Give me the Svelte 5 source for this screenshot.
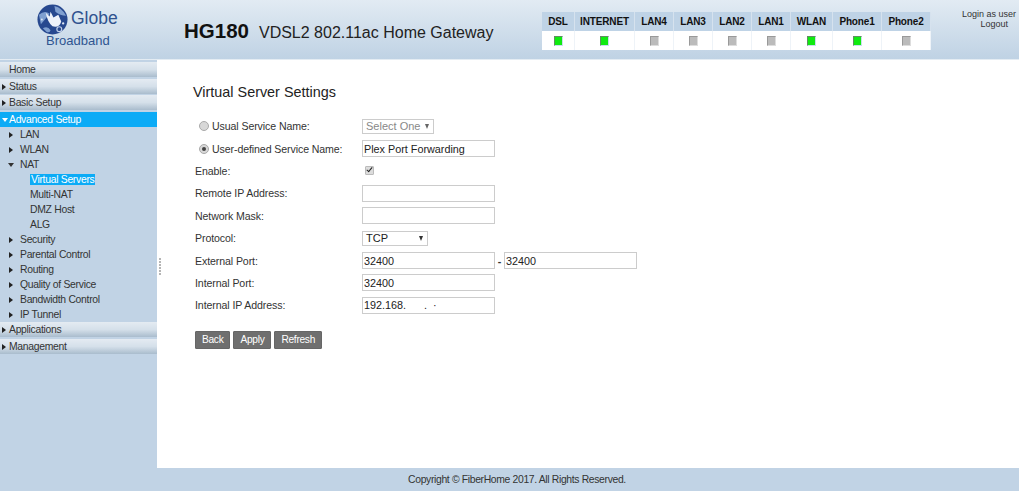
<script>
	const lights = [
		{ name: 'DSL', width: 32, on: true },
		{ name: 'INTERNET', width: 59, on: true },
		{ name: 'LAN4', width: 38, on: false },
		{ name: 'LAN3', width: 38, on: false },
		{ name: 'LAN2', width: 38, on: false },
		{ name: 'LAN1', width: 38, on: false },
		{ name: 'WLAN', width: 41, on: true },
		{ name: 'Phone1', width: 48, on: true },
		{ name: 'Phone2', width: 48, on: false }
	];

	const subItems = [
		{ name: 'LAN' },
		{ name: 'WLAN' },
		{ name: 'NAT', open: true, children: ['Virtual Servers', 'Multi-NAT', 'DMZ Host', 'ALG'] },
		{ name: 'Security' },
		{ name: 'Parental Control' },
		{ name: 'Routing' },
		{ name: 'Quality of Service' },
		{ name: 'Bandwidth Control' },
		{ name: 'IP Tunnel' }
	];
</script>

<div class="page">
	<header>
		<div class="logo">
			<svg width="31" height="31" viewBox="0 0 32 32">
				<circle cx="16" cy="16" r="15.5" fill="#27488f" />
				<path d="M2 11 Q8 6 13 10 Q9 15 4 21Z M18 2 Q26 4 30 12 Q24 12 19 8Z M6 25 Q11 22 14 27 Q13 30 10 29Z" fill="#7f9fd0" />
				<path d="M9 9 L13 13 L14 8 L17 14 L22 11 L25 18 Q23 25 16 23 Q11 19 9 9Z" fill="#eef2fa" />
				<circle cx="23" cy="26" r="2.5" fill="none" stroke="#c3d2ea" stroke-width="1.2" />
				<circle cx="5" cy="16" r="1" fill="#dfe8f5" />
				<circle cx="27" cy="20" r="1.2" fill="#dfe8f5" />
			</svg>
			<span class="globe">Globe</span>
			<span class="broadband">Broadband</span>
		</div>
		<div class="title"><strong>HG180</strong><span>VDSL2 802.11ac Home Gateway</span></div>
		<table class="lights">
			<thead>
				<tr>
					{#each lights as l}
						<th style="width: {l.width}px">{l.name}</th>
					{/each}
				</tr>
			</thead>
			<tbody>
				<tr>
					{#each lights as l}
						<td><i class="led" class:on={l.on}></i></td>
					{/each}
				</tr>
			</tbody>
		</table>
		<div class="login">
			<div>Login as user</div>
			<div class="logout">Logout</div>
		</div>
	</header>

	<div class="middle">
		<nav>
			<div class="top">Home</div>
			<div class="top"><i class="tri"></i>Status</div>
			<div class="top"><i class="tri"></i>Basic Setup</div>
			<div class="top active"><i class="tri down"></i>Advanced Setup</div>
			<ul>
				{#each subItems as item}
					<li>
						<i class="tri" class:down={item.open}></i>{item.name}
					</li>
					{#if item.children}
						{#each item.children as child, i}
							<li class="child"><span class:current={i === 0}>{child}</span></li>
						{/each}
					{/if}
				{/each}
			</ul>
			<div class="top"><i class="tri"></i>Applications</div>
			<div class="top"><i class="tri"></i>Management</div>
		</nav>

		<main>
			<div class="grip"><b></b><b></b><b></b><b></b><b></b><b></b></div>
			<h1>Virtual Server Settings</h1>
			<form>
				<div class="row">
					<label class="radio"><input type="radio" name="svc" />Usual Service Name:</label>
					<div class="fake-select grey">Select One<em></em></div>
				</div>
				<div class="row">
					<label class="radio"><input type="radio" name="svc" checked />User-defined Service Name:</label>
					<input class="text" value="Plex Port Forwarding" />
				</div>
				<div class="row">
					<label>Enable:</label>
					<input class="check" type="checkbox" checked />
				</div>
				<div class="row">
					<label>Remote IP Address:</label>
					<input class="text" />
				</div>
				<div class="row">
					<label>Network Mask:</label>
					<input class="text" />
				</div>
				<div class="row">
					<label>Protocol:</label>
					<div class="fake-select proto">TCP<em></em></div>
				</div>
				<div class="row">
					<label>External Port:</label>
					<input class="text" value="32400" />
					<span class="dash">-</span>
					<input class="text" value="32400" />
				</div>
				<div class="row">
					<label>Internal Port:</label>
					<input class="text" value="32400" />
				</div>
				<div class="row">
					<label>Internal IP Address:</label>
					<input class="text" value="192.168.      .  ·" />
				</div>
				<div class="buttons">
					<button type="button">Back</button>
					<button type="button">Apply</button>
					<button type="button">Refresh</button>
				</div>
			</form>
		</main>
	</div>

	<footer>Copyright © FiberHome 2017. All Rights Reserved.</footer>
</div>

<style>
	:global(body) {
		margin: 0;
		background: #fff;
	}

	.page {
		width: 1019px;
		height: 491px;
		display: flex;
		flex-direction: column;
		font-family: 'Liberation Sans', Arial, sans-serif;
		font-size: 12px;
		color: #333;
		overflow: hidden;
	}

	header {
		height: 60px;
		flex: none;
		display: flex;
		align-items: flex-start;
		background: linear-gradient(#e2ebf3, #bfd2e4);
		border-bottom: 1px solid #e4ecf3;
		box-sizing: border-box;
	}

	.logo {
		width: 184px;
		flex: none;
		display: grid;
		grid-template-columns: 34px auto;
		grid-template-rows: 29px auto;
		padding: 4px 0 0 37px;
		box-sizing: border-box;
		height: 56px;
	}

	.logo svg {
		grid-row: 1;
		grid-column: 1;
	}

	.globe {
		font-size: 17.5px;
		color: #30538f;
		padding-top: 5px;
		line-height: 18px;
	}

	.broadband {
		grid-row: 2;
		grid-column: 1 / 3;
		font-size: 13px;
		color: #2f5590;
		padding: 0 0 0 9px;
		line-height: 15px;
	}

	.title {
		width: 358px;
		flex: none;
		padding-top: 19px;
		color: #111;
		white-space: nowrap;
		display: flex;
		align-items: baseline;
		gap: 10px;
	}

	.title strong {
		font-size: 20.5px;
	}

	.title span {
		font-size: 16px;
		color: #222;
	}

	.lights {
		width: 389px;
		border-collapse: collapse;
		margin-top: 12px;
		flex: none;
		table-layout: fixed;
		font-size: 10px;
		letter-spacing: -0.15px;
	}

	.lights th {
		height: 19px;
		padding: 0;
		background: #bfd3e6;
		color: #111;
		font-weight: bold;
		text-align: center;
		border-right: 1px solid #d6e2ee;
	}

	.lights td {
		height: 19px;
		padding: 0;
		background: #fff;
		text-align: center;
		border-right: 1px solid #eef3f8;
	}

	.led {
		display: inline-block;
		width: 7px;
		height: 8px;
		background: #bbb;
		border: 1px solid #999;
		border-right-color: #ddd;
		border-bottom-color: #ddd;
		vertical-align: middle;
	}

	.led.on {
		background: #10ea10;
		border-color: #5f8f5f;
		border-right-color: #cde;
		border-bottom-color: #cde;
	}

	.login {
		flex: 1;
		padding: 9px 3px 0 0;
		font-size: 9px;
		line-height: 10px;
		text-align: right;
		color: #333;
	}

	.logout {
		padding-right: 8px;
	}

	.middle {
		flex: 1;
		display: flex;
		min-height: 0;
	}

	nav {
		width: 157px;
		flex: none;
		background: #c1d3e5;
		padding-top: 2px;
		box-sizing: border-box;
		font-size: 10.4px;
		letter-spacing: -0.3px;
	}

	.top {
		height: 15px;
		line-height: 15px;
		margin-bottom: 1.6px;
		padding-left: 9px;
		position: relative;
		color: #333;
		background: linear-gradient(#e4ebf2, #d5e0ea 50%, #a9bccd);
	}

	.top.active {
		background: #0cabf6;
		color: #fff;
		height: 15.5px;
		margin-bottom: 0;
	}

	.top .tri {
		position: absolute;
		left: 2px;
		top: 5px;
	}

	.tri {
		display: inline-block;
		width: 0;
		height: 0;
		border-left: 4px solid #222;
		border-top: 3px solid transparent;
		border-bottom: 3px solid transparent;
	}

	.tri.down {
		border-left: 3px solid transparent;
		border-right: 3px solid transparent;
		border-top: 4px solid #333;
		border-bottom: 0;
	}

	.active .tri.down {
		border-top-color: #fff;
		top: 6px;
	}

	ul {
		list-style: none;
		margin: 0;
		padding: 0;
	}

	li {
		height: 15px;
		line-height: 15px;
		padding-left: 20px;
		position: relative;
		color: #333;
	}

	li .tri {
		position: absolute;
		left: 9px;
		top: 5px;
	}

	li .tri.down {
		left: 8px;
		top: 6px;
	}

	li.child {
		padding-left: 30px;
	}

	.current {
		background: #0cabf6;
		color: #fff;
		padding: 0 1px;
		display: inline-block;
		line-height: 11px;
	}

	main {
		flex: 1;
		position: relative;
		background: #fff;
		padding: 24px 0 0 36px;
		box-sizing: border-box;
	}

	.grip {
		position: absolute;
		left: 2px;
		top: 198px;
		display: flex;
		flex-direction: column;
		gap: 1px;
	}

	.grip b {
		width: 2px;
		height: 2px;
		background: #b5b5b5;
	}

	h1 {
		margin: 0 0 15px;
		font-size: 14.4px;
		font-weight: normal;
		line-height: 16px;
		color: #222;
	}

	form {
		display: flex;
		flex-direction: column;
	}

	.row {
		display: flex;
		align-items: center;
		height: 22.4px;
		font-size: 10.6px;
		letter-spacing: -0.1px;
	}

	.row > label {
		width: 169px;
		padding-left: 2px;
		box-sizing: border-box;
		flex: none;
		white-space: nowrap;
		display: flex;
		align-items: center;
	}

	.radio input {
		appearance: none;
		box-sizing: border-box;
		margin: 0 3px 0 4px;
		width: 10px;
		height: 10px;
		border-radius: 50%;
		border: 1px solid #aaa;
		background: #d8d8d8;
		display: grid;
		place-items: center;
	}

	.radio input:checked::before {
		content: '';
		width: 4px;
		height: 4px;
		border-radius: 50%;
		background: #444;
	}

	.text {
		width: 133px;
		height: 17px;
		box-sizing: border-box;
		border: 1px solid #ccc;
		padding: 0 1px;
		font: 10.8px 'Liberation Sans', Arial, sans-serif;
		color: #222;
		margin: 0;
		outline: none;
	}

	.check {
		appearance: none;
		box-sizing: border-box;
		margin: 0 0 0 3px;
		width: 9px;
		height: 9px;
		border: 1px solid #bbb;
		border-radius: 1px;
		background: #dcdcdc;
		position: relative;
	}

	.check:checked::before {
		content: '';
		position: absolute;
		left: 2px;
		top: -1px;
		width: 2px;
		height: 5px;
		border: solid #222;
		border-width: 0 1.5px 1.5px 0;
		transform: rotate(40deg);
	}

	.fake-select {
		box-sizing: border-box;
		border: 1px solid #ccc;
		height: 15px;
		line-height: 13px;
		padding-left: 3px;
		font-size: 11px;
		letter-spacing: 0;
		position: relative;
		background: #fff;
	}

	.fake-select.grey {
		width: 72px;
		color: #888;
	}

	.fake-select.proto {
		width: 66px;
		color: #222;
	}

	.fake-select em {
		position: absolute;
		right: 4px;
		top: 4px;
		border-left: 2.5px solid transparent;
		border-right: 2.5px solid transparent;
		border-top: 5px solid #333;
	}

	.fake-select.grey em {
		border-top-color: #666;
	}

	.dash {
		width: 9px;
		text-align: center;
		font-weight: bold;
	}

	.buttons {
		display: flex;
		gap: 3px;
		margin-top: 14px;
		padding-left: 2px;
	}

	button {
		height: 18px;
		padding: 0 6px;
		border: 1px solid #666;
		background: #6f6f6f;
		color: #fff;
		font: 10.2px 'Liberation Sans', Arial, sans-serif;
		letter-spacing: -0.3px;
		border-radius: 1px;
	}

	footer {
		height: 23px;
		flex: none;
		background: #c1d3e5;
		text-align: center;
		font-size: 10.4px;
		letter-spacing: -0.35px;
		line-height: 24px;
		color: #333;
		padding-left: 15px;
		box-sizing: border-box;
	}
</style>
